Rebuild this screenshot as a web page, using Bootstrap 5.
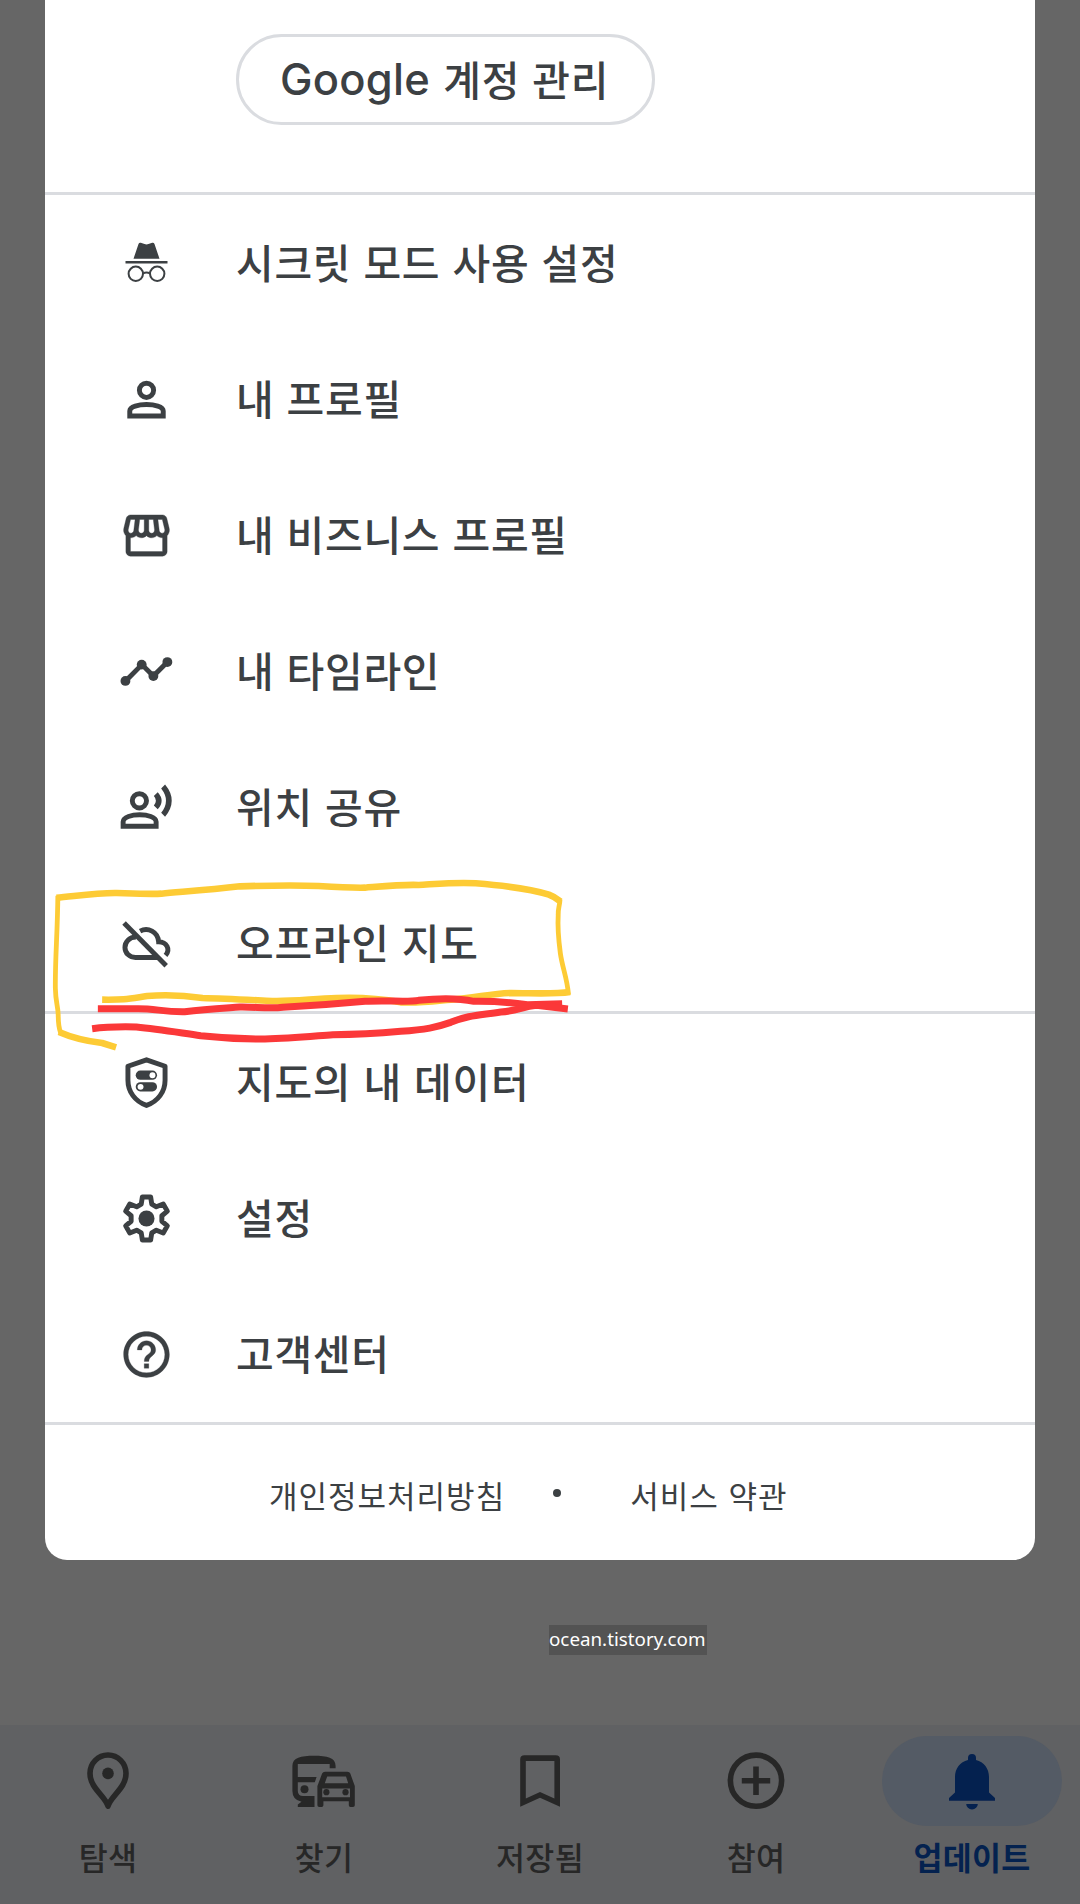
<!DOCTYPE html>
<html lang="ko">
<head>
<meta charset="utf-8">
<meta name="viewport" content="width=device-width, initial-scale=1">
<title>Google 지도</title>
<link href="https://cdn.jsdelivr.net/npm/bootstrap@5.3.0/dist/css/bootstrap.min.css" rel="stylesheet">
<style>
  body { background: #666; font-family: "Noto Sans CJK KR", sans-serif; color: #3c4043; }
  .screen { width: 1080px; height: 1904px; }
  .account-sheet { width: 990px; height: 1560px; border-radius: 0 0 22px 22px; }
  .sheet-head { height: 195px; padding: 34px 0 0 191px; border-bottom: 3px solid #dadce0; }
  .manage-btn { width: 419px; height: 91px; border: 3px solid #dadce0; color: #3c4043; font-size: 41px; line-height: 1; font-weight: 500; letter-spacing: .7px; padding: 0 2px 3px 0; }
  .manage-btn .latin { font-family: Inter, sans-serif; font-size: 43.5px; font-weight: 450; letter-spacing: .3px; margin: 3px 13px 0 0; }
  .menu-group { border-bottom: 3px solid #dadce0; }
  .menu-row { height: 136px; padding-left: 73.5px; gap: 62.5px; font-size: 41px; font-weight: 500; line-height: 1; color: #3c4043; text-decoration: none; letter-spacing: .7px; }
  .menu-row span { padding-bottom: 4px; }
  .menu-row svg { width: 55px; height: 55px; fill: #3c4043; flex: none; }
  .ln { fill: none; stroke: #3c4043; stroke-width: 2.15; }
  .legal { height: 135px; padding-left: 224px; font-size: 31px; line-height: 1; padding-top: 3px; letter-spacing: 1px; }
  .legal a { color: #3c4043; text-decoration: none; }
  .legal-dot { width: 8px; height: 8px; background: #3c4043; margin: 0 69px 3px 48px; }
  .pen { position: absolute; left: 40px; top: 860px; width: 560px; height: 210px; pointer-events: none; }
  .pen path { fill: none; stroke-linejoin: round; vector-effect: non-scaling-stroke; }
  .site-tag { margin: 65px 0 0 549px; width: 158px; height: 30px; background: #535353; color: #fff; font: 18.8px/28px "Noto Sans", sans-serif; white-space: nowrap; }
  .tabs { height: 179px; background: #606163; color: #272727; }
  .tab-cell { width: 216px; padding-top: 11px; font-size: 31.5px; line-height: 1; font-weight: 500; letter-spacing: .3px; }
  .tab-ico { width: 180px; height: 90px; margin-bottom: 15px; }
  .tab-ico svg { width: 72px; height: 72px; fill: #272727; }
  .tab-cell .tl { fill: none; stroke: #272727; stroke-width: 5.6; }
  .tab-on { color: #04224f; font-weight: 700; }
  .tab-on .tab-ico { background: #545b65; }
  .tab-on .tab-ico svg { fill: #04214f; }
</style>
</head>
<body>
<div class="screen position-relative d-flex flex-column overflow-hidden">
  <main class="account-sheet bg-white mx-auto flex-shrink-0">
    <header class="sheet-head">
      <button class="manage-btn rounded-pill bg-white d-flex align-items-center justify-content-center" type="button"><span class="latin">Google</span><span>계정 관리</span></button>
    </header>
    <nav class="menu-group">
      <a class="menu-row d-flex align-items-center">
        <svg viewBox="2.5 2.5 55 55"><path d="M17 25.3 22 10.4Q22.7 8.800 24.300 9.300L28 10.600Q30 11.400 32 10.600L35.700 9.300Q37.300 8.800 38 10.400L43 25.300ZM9 27.600H51V29.900H9Z"/><g class="ln" style="stroke-width:2"><circle cx="19.300" cy="40.300" r="7.200"/><circle cx="40.700" cy="40.300" r="7.200"/><path d="M26.500 40Q30 38 33.500 40"/></g></svg>
        <span>시크릿 모드 사용 설정</span></a>
      <a class="menu-row d-flex align-items-center">
        <svg viewBox="0 0 24 24"><g class="ln"><circle cx="12" cy="8" r="3.100"/><path d="M4.700 19.200V17C4.700 15 8.600 14.200 12 14.200S19.300 15 19.300 17V19.200Z"/></g></svg>
        <span>내 프로필</span></a>
      <a class="menu-row d-flex align-items-center">
        <svg viewBox="0 0 24 24"><path stroke="#3c4043" stroke-width=".15" d="M21.9 8.890l-1.050-4.370c-.22-.9-1-1.520-1.910-1.520H5.050c-.9 0-1.690.63-1.900 1.520L2.100 8.890c-.24 1.020-.02 2.060.62 2.880.08.11.19.19.28.29V19c0 1.100.9 2 2 2h14c1.100 0 2-.9 2-2v-6.940c.09-.09.2-.18.28-.28.64-.82.87-1.870.62-2.890zm-2.990-3.900l1.050 4.370c.1.42.01.84-.25 1.170-.14.18-.44.47-.94.47-.61 0-1.140-.49-1.210-1.140L16.980 5l1.930-.01zM13 5h1.960l.54 4.520c.05.39-.07.78-.33 1.070-.22.26-.54.41-.95.41-.67 0-1.220-.59-1.220-1.310V5zM8.490 9.520L9.040 5H11v4.690c0 .72-.55 1.310-1.290 1.310-.34 0-.65-.15-.89-.41-.25-.29-.37-.68-.33-1.070zm-4.450-.16L5.050 5h1.970l-.58 4.860c-.08.65-.6 1.140-1.210 1.140-.49 0-.8-.29-.93-.47-.27-.32-.36-.75-.26-1.170zM5 19v-6.030c.08.01.15.03.23.03.87 0 1.660-.36 2.240-.95.6.6 1.400.95 2.310.95.87 0 1.650-.36 2.230-.93.59.57 1.390.93 2.290.93.84 0 1.640-.35 2.240-.95.58.59 1.370.95 2.240.95.08 0 .15-.02.23-.03V19H5z"/></svg>
        <span>내 비즈니스 프로필</span></a>
      <a class="menu-row d-flex align-items-center">
        <svg viewBox="0 0 24 24"><path class="ln" d="M3 16 10 9 15 14 21 8"/><circle cx="2.800" cy="16.100" r="2.150"/><circle cx="9.900" cy="9" r="2.150"/><circle cx="15" cy="14" r="2.150"/><circle cx="21.100" cy="7.900" r="2.150"/></svg>
        <span>내 타임라인</span></a>
      <a class="menu-row d-flex align-items-center">
        <svg viewBox="0 0 24 24"><g class="ln"><circle cx="8.900" cy="9.100" r="3.100"/><path d="M1.800 20.200V18.200C1.800 16.100 5.600 15.200 9 15.200S16.200 16.100 16.200 18.200V20.200Z"/></g><path d="M16.900 5.300 15.200 7Q17 9 15.200 11.100L16.900 12.800Q20.300 9 16.900 5.300ZM20.100 2 18.400 3.700Q22.600 9 18.400 14.300L20.100 16Q25.900 9 20.100 2Z"/></svg>
        <span>위치 공유</span></a>
      <a class="menu-row d-flex align-items-center">
        <svg viewBox="0 0 24 24" overflow="visible"><g class="ln"><path d="M2.200 3.100 20.600 21.700"/><path d="M7.400 9.200C4.500 9.200 2.600 11.300 2.600 13.700C2.600 16.200 4.600 18.100 7.200 18.100H16.900M9.200 6.600C12.600 4.800 17 6.800 17.300 11.300C20.800 11.300 22.600 14.600 20.300 17.200"/></g></svg>
        <span>오프라인 지도</span></a>
    </nav>
    <nav class="menu-group">
      <a class="menu-row d-flex align-items-center">
        <svg viewBox="0 0 24 24"><path class="ln" stroke-linejoin="round" d="M12 2.100 20.100 4.900V11C20.100 16 17 20.300 12 22C7 20.300 3.900 16 3.900 11V4.900Z"/><rect x="7.300" y="6.800" width="9.300" height="4" rx="2"/><rect x="7.300" y="11.900" width="9.300" height="4" rx="2"/><circle cx="14.600" cy="8.800" r="1.300" fill="#fff"/><circle cx="9.400" cy="13.900" r="1.300" fill="#fff"/></svg>
        <span>지도의 내 데이터</span></a>
      <a class="menu-row d-flex align-items-center">
        <svg viewBox="0 0 24 24"><path d="M10.200 2.600H13.800L14.300 5.700 16.300 6.900 19.300 5.700 21.100 8.800 18.700 10.800V13.200L21.100 15.200 19.300 18.300 16.300 17.100 14.300 18.300 13.800 21.400H10.200L9.700 18.300 7.700 17.100 4.700 18.300 2.900 15.200 5.300 13.200V10.800L2.900 8.800 4.700 5.700 7.700 6.900 9.700 5.700Z" class="ln" stroke-linejoin="round"/><circle cx="12" cy="12" r="3.500"/></svg>
        <span>설정</span></a>
      <a class="menu-row d-flex align-items-center">
        <svg viewBox="0 0 24 24"><path stroke="#3c4043" stroke-width=".12" d="M11 18h2v-2h-2v2zm1-16C6.480 2 2 6.480 2 12s4.480 10 10 10 10-4.480 10-10S17.520 2 12 2zm0 18c-4.410 0-8-3.590-8-8s3.590-8 8-8 8 3.590 8 8-3.590 8-8 8zm0-14c-2.210 0-4 1.790-4 4h2c0-1.100.9-2 2-2s2 .9 2 2c0 2-3 1.750-3 5h2c0-2.250 3-2.500 3-5 0-2.210-1.790-4-4-4z"/></svg>
        <span>고객센터</span></a>
    </nav>
    <footer class="legal d-flex align-items-center">
      <a>개인정보처리방침</a><span class="legal-dot rounded-circle"></span><a>서비스 약관</a>
    </footer>
  </main>

  <div class="site-tag">ocean.tistory.com</div>

  <nav class="tabs d-flex mt-auto flex-shrink-0">
    <div class="tab-cell d-flex flex-column align-items-center">
      <div class="tab-ico d-flex align-items-center justify-content-center"><svg viewBox="0 0 72 72"><path class="tl" stroke-linejoin="round" d="M36 61.200C33.500 51 18 43.500 18 28.300A18 18.300 0 0 1 54 28.300C54 43.500 38.500 51 36 61.200Z"/><circle cx="36" cy="28.400" r="5.800"/></svg></div>탐색</div>
    <div class="tab-cell d-flex flex-column align-items-center">
      <div class="tab-ico d-flex align-items-center justify-content-center"><svg viewBox="0 0 72 72"><path fill-rule="evenodd" d="M4.400 21C4.400 12.500 13 10.700 26 10.700S47.600 12.500 47.600 21V23.300H41.700V19H9.800V32H28.600L26.800 37.200H9.800V46Q10 51 15 51H26.500V62H9.800V59.500L13.500 56.700Q4.400 55 4.400 46Z"/><circle cx="16.500" cy="44.200" r="4"/><path fill-rule="evenodd" d="M29.400 41 34.100 28.600Q34.900 26.700 37 26.700H59.400Q61.700 26.700 62.300 28.600L66.800 41V60.300Q66.800 62 65 62H62.500Q60.800 62 60.800 60.300V56.300H35.400V60.300Q35.400 62 33.700 62H31.200Q29.400 62 29.400 60.300ZM39.200 31.400 36.800 38.200H60.200L58 31.400ZM34.200 43.600V52.200H62V43.600Z"/><circle cx="38.400" cy="47.200" r="3.100"/><circle cx="57.500" cy="47.200" r="3.100"/></svg></div>찾기</div>
    <div class="tab-cell d-flex flex-column align-items-center">
      <div class="tab-ico d-flex align-items-center justify-content-center"><svg viewBox="0 0 72 72"><path fill-rule="evenodd" d="M16.200 61.700V14.500Q16.200 10.300 20.500 10.300H51.700Q56 10.300 56 14.500V61.700L36 52.700ZM21.800 53.500 36 47 50.400 53.500V16H21.800Z"/></svg></div>저장됨</div>
    <div class="tab-cell d-flex flex-column align-items-center">
      <div class="tab-ico d-flex align-items-center justify-content-center"><svg viewBox="0 0 72 72"><g class="tl"><circle cx="36" cy="35.700" r="25.600"/><path d="M21.800 35.700H50.200M36 21.500V49.900"/></g></svg></div>참여</div>
    <div class="tab-cell tab-on d-flex flex-column align-items-center">
      <div class="tab-ico rounded-pill d-flex align-items-center justify-content-center"><svg viewBox="0 0 72 72"><path d="M13 55.700V53L19 47.500V32C19 23.500 24 17 32 15V13A4 4 0 0 1 40 13V15C48 17 53 23.500 53 32V47.500L59 53V55.700ZM30.200 59H41.800A5.800 5.400 0 0 1 30.200 59Z"/></svg></div>업데이트</div>
  </nav>

  <!-- freehand pen marks around the offline maps row -->
  <svg class="pen" viewBox="0 0 1568 630" preserveAspectRatio="none">
    <g stroke="#fdcb35" stroke-width="6.600">
      <path d="M46 113C100 108 160 98 215 99C270 101 310 103 340 101C400 95 470 90 560 79C650 76 740 76 780 78C840 82 870 84 910 83C970 78 1020 73 1060 75C1110 72 1170 66 1220 70C1290 76 1370 86 1425 104C1440 110 1450 118 1457 124"/>
      <path stroke-width="4.800" d="M50 107C49 220 42 300 43 385C44 430 50 435 51 465Q51 500 58 519"/>
      <path stroke-width="4.800" d="M1456 118C1455 140 1450 145 1451 165C1449 200 1452 240 1457 280C1463 325 1475 350 1480 404"/>
      <path d="M1484 396C1440 403 1400 400 1320 399C1260 400 1220 415 1150 419C1100 424 1060 430 1010 427C950 415 900 411 830 414C760 417 700 425 650 423C590 420 520 416 455 414C410 407 350 404 300 408C250 416 240 420 174 419"/>
      <path d="M53 516C100 538 150 546 174 549Q195 556 213 562"/>
    </g>
    <g stroke="#fb3839" stroke-width="7">
      <path d="M162 446H275C325 446 345 456 405 455C460 449 500 446 560 441C600 440 640 447 680 442C770 437 840 431 910 424C970 420 1030 427 1060 421C1120 414 1180 416 1215 424C1280 423 1330 429 1365 434L1462 431"/>
      <path d="M146 506C190 500 230 500 270 501C330 507 390 518 450 527C510 534 570 537 630 537C700 536 760 529 820 524C890 524 950 520 1010 514C1080 509 1110 502 1150 487C1200 465 1230 466 1290 456C1340 452 1350 440 1390 436L1478 447"/>
    </g>
  </svg>
</div>
<script src="https://cdn.jsdelivr.net/npm/bootstrap@5.3.0/dist/js/bootstrap.bundle.min.js"></script>
</body>
</html>
